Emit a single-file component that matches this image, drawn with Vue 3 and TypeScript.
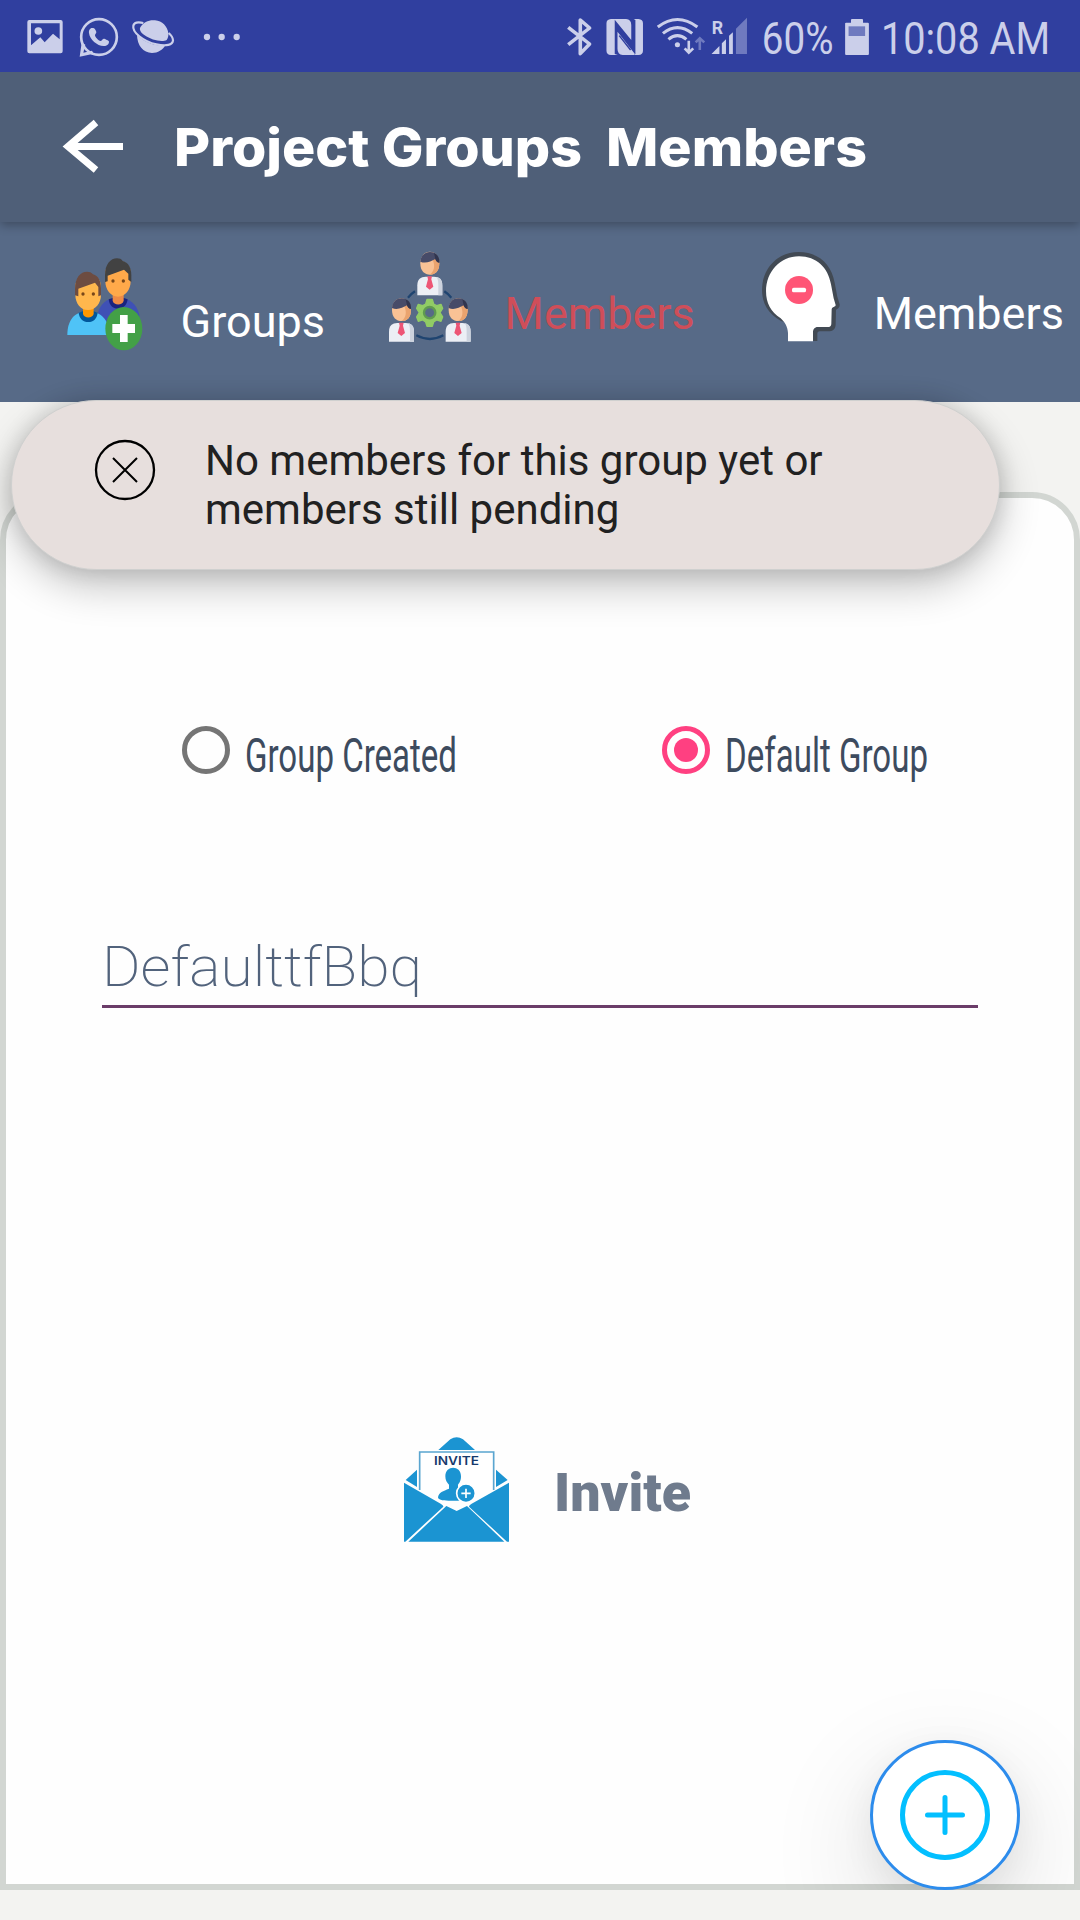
<script setup lang="ts">
import { ref } from 'vue'

type GroupKind = 'created' | 'default'

interface GroupOption {
  kind: GroupKind
  label: string
  width: number
}

const options: GroupOption[] = [
  { kind: 'created', label: 'Group Created', width: 212 },
  { kind: 'default', label: 'Default Group', width: 203 },
]
const selected = ref<GroupKind>('default')
const groupName = ref('DefaulttfBbq')
</script>

<template>
  <div class="screen">
    <header class="status">
      <svg class="status-left" viewBox="0 0 750 216">
        <g fill="#cbcfea">
          <path fill-rule="evenodd" d="M88 60h94q6 0 6 6v88q0 6-6 6H88q-6 0-6-6V66q0-6 6-6zM93 70v66l28-24 13 15 25-26 20 17V70z" />
          <circle cx="115" cy="93" r="11.500" />
          <circle cx="297" cy="111" r="53.500" fill="none" stroke="#cbcfea" stroke-width="8" />
          <path d="M245 128l-6 42 42-9-5-9-26 6 6-24z" />
          <path d="M276 84c-6 0-10 7-9 15 2 20 26 40 45 39 9 0 15-6 15-13 0-3-12-9-16-9-4 1-6 7-9 7-7-1-17-12-17-17 0-4 4-5 4-9 0-4-5-13-9-13z" />
          <path d="M421 82c9-16 27-23 44-21 22 2 37 18 40 38 1 8-1 15-5 21-14 8-46 0-66-14-12-8-17-17-13-24z" />
          <path d="M411 103c14 20 56 39 85 33-8 14-22 23-40 23-26 0-45-22-45-56z" />
          <path d="M430 69c-16-4-28-2-30 8-4 20 31 48 69 56 30 6 49 2 50-12 0-7-5-15-13-22" fill="none" stroke="#cbcfea" stroke-width="6.500" />
          <circle cx="621" cy="111" r="9.500" /><circle cx="665" cy="111" r="9.500" /><circle cx="710" cy="111" r="9.500" />
        </g>
      </svg>
      <svg class="status-right" viewBox="0 0 1568 216" preserveAspectRatio="none">
        <path d="M82 82l62 50-27 29V60l27 24-62 50" fill="none" stroke="#cbcfea" stroke-width="10.500" stroke-linejoin="round" />
        <path d="M206 57h44q15 2 15 18v45l-48-61v103l9 3h-20q-13-1-13-13V70q0-12 13-13z" fill="#cbcfea" />
        <path d="M272 57h14q13 1 13 13v82q0 12-13 13h-12l3-3V60zM225 95l50 66-1 4h-34q-15-1-15-19z" fill="#cbcfea" />
        <path d="M230 107l33 43M231 96l28 26" stroke="#303f9f" stroke-width="4" />
        <g fill="none" stroke="#cbcfea" stroke-width="9">
          <path d="M342 81q57-45 115 0M357 100q42-34 85 0M373 118q26-22 52 0" />
          <path d="M432 122v35M420 145l12 13 13-13" stroke-width="7.500" />
          <path d="M464 150v-34M452 127l12-12 13 12" stroke="#6f7abf" stroke-width="7.500" />
        </g>
        <circle cx="399" cy="134" r="7.500" fill="#cbcfea" />
        <path d="M569 162V86l32-33v109z" fill="#6f7abf" />
        <path d="M498 162l23-24v24zM528 162v-32l12-12v44zM549 162v-55l11-10v65z" fill="#cbcfea" />
        <path d="M886 70q0-2 3-2h14v-8q0-3 3-3h29q3 0 3 3v8h14q3 0 3 3v91q0 3-3 3h-63q-3 0-3-3z" fill="#cbcfea" />
        <path d="M896 79h48v29h-48z" fill="#6f7abf" />
        <g fill="#cbcfea">
          <text x="499" y="101" font-size="54" font-weight="700" textLength="33" lengthAdjust="spacingAndGlyphs">R</text>
          <text x="644" y="162" font-size="135" textLength="208" lengthAdjust="spacingAndGlyphs">60%</text>
          <text x="990" y="162" font-size="135" textLength="491" lengthAdjust="spacingAndGlyphs">10:08 AM</text>
        </g>
      </svg>
    </header>

    <div class="toolbar">
      <svg class="back" width="62" height="54" viewBox="0 0 62 54">
        <path d="M34 3.500L6 27.500L34 51M6 27.500H61" fill="none" stroke="#fff" stroke-width="7" />
      </svg>
      <svg class="title" width="760" height="80" viewBox="0 0 760 80">
        <text x="1" y="48" textLength="408" lengthAdjust="spacingAndGlyphs">Project Groups</text>
        <text x="433" y="48" textLength="261" lengthAdjust="spacingAndGlyphs">Members</text>
      </svg>
    </div>

    <nav class="tabs">
      <div class="tab first">
        <svg class="tab-icon" width="80" height="97" viewBox="75 75 240 291">
          <path d="M174 248c7-26 26-45 60-45s56 18 64 52v25H190z" fill="#3f51b5" />
          <path d="M206 208c2 18 12 28 28 28s27-11 29-28l-14-5h-28z" fill="#1a237e" />
          <path d="M218 190h33v22c-3 15-30 15-33 0z" fill="#ef8b46" />
          <path d="M196 130c0-50 78-50 76 0v24c0 26-17 46-38 46s-38-20-38-46z" fill="#ffa94a" />
          <path d="M195 156v-20c0-34 17-51 36-51 7 0 14 2 17 8 17 4 26 20 26 42v21l-9-7v-18l-13-12-49 18v17z" fill="#424242" />
          <circle cx="219" cy="153" r="5" fill="#784719" /><circle cx="250" cy="153" r="5" fill="#784719" />
          <path d="M82 315c0-42 20-71 62-71 38 0 64 26 64 71z" fill="#4fc3f7" />
          <path d="M116 248c2 18 13 28 29 28 15 0 26-10 28-28l-14-5h-29z" fill="#01579b" />
          <path d="M129 230h32v22c-3 14-29 14-32 0z" fill="#ff9800" />
          <path d="M106 170c0-50 78-50 77 0v24c0 26-17 46-39 46s-38-20-38-46z" fill="#ffb74d" />
          <path d="M105 196v-19c0-35 17-52 36-52 7 0 14 2 18 8 16 4 24 20 24 42v21l-8 3v-28l-10-13-50 18v23z" fill="#6d4c41" />
          <circle cx="129" cy="192" r="5" fill="#784719" /><circle cx="160" cy="192" r="5" fill="#784719" />
          <ellipse cx="251.500" cy="296" rx="55.500" ry="65" fill="#43a047" />
          <path d="M240 255h23v27h22v27h-22v27h-23v-27h-23v-27h23z" fill="#fff" />
        </svg>
        <span class="tab-label low">Groups</span>
      </div>
      <div class="tab second">
        <svg class="tab-icon" width="83.300" height="93.300" viewBox="55 60 250 280">
          <defs>
            <g id="person">
              <path d="M-28 34c0-46 57-46 57 0 0 24-12 34-28 34S-28 58-28 34z" fill="#f9c295" />
              <path d="M8 2c15 6 21 17 21 32 0 24-12 34-28 34C15 58 17 38 8 22z" fill="#eaa36e" />
              <path d="M-28 29c2-20 15-29 29-29 18 0 29 13 28 32-7-1-11-7-12-11-13 7-29 15-45 8z" fill="#474b68" />
              <path d="M13 3c11 5 17 15 16 29-7-1-11-7-12-11z" fill="#31354e" />
              <path d="M-37 130V100c0-18 10-26 25-26h25c16 0 25 8 25 26v30z" fill="#eceff5" />
              <path d="M21 75c11 2 17 10 17 25v30H26v-30c0-13-1-18-5-25z" fill="#cdd3de" />
              <path d="M-7 73H7L5 82l6 22L0 113l-11-9 6-22z" fill="#ed5575" />
            </g>
          </defs>
          <path d="M115 203q10-12 21-19M224 184q11 7 21 19M140 316q41 22 81 0" fill="none" stroke="#1f4470" stroke-width="7" />
          <use href="#person" x="180" y="66" />
          <use href="#person" x="95" y="205" />
          <use href="#person" x="265" y="205" />
          <path d="M172 208h16l4 14 9 5 13-4 5 12-8 13 8 13-5 13-13-4-9 6-4 13h-16l-4-13-9-6-13 4-5-13 8-13-8-13 5-12 13 4 9-5z" fill="#91cc65" stroke="#91cc65" stroke-width="4" stroke-linejoin="round" />
          <circle cx="180" cy="248" r="17" fill="#576a87" stroke="#5f9a50" stroke-width="7" />
        </svg>
        <span class="tab-label active">Members</span>
      </div>
      <div class="tab third">
        <svg class="tab-icon" width="81.700" height="93.300" viewBox="60 60 245 280">
          <path d="M123 273C83 251 66 218 66 180 66 116 112 66 176 66c60 0 99 38 108 92l8 42 7 23c1 9-5 13-11 16l-1 45c-1 14-9 20-22 20h-26q-7 0-7 8v21h-20V300z" fill="#424a54" />
          <path d="M144 334v-24c-1-20-10-34-22-45-30-19-44-46-44-81 0-58 42-105 99-105 53 0 87 34 96 84l8 42 6 20c0 7-11 4-12 13l-1 43c0 7-4 10-11 10h-30c-9 0-14 7-14 16v27z" fill="#fff" />
          <circle cx="177" cy="180" r="42" fill="#ff5576" />
          <rect x="156" y="173" width="42" height="14" rx="5" fill="#fff" />
        </svg>
        <span class="tab-label">Members</span>
      </div>
    </nav>

    <main class="body">
      <section class="panel">
        <div class="options">
          <label v-for="o in options" :key="o.kind" class="option" @click="selected = o.kind">
            <svg class="radio" width="50" height="50" viewBox="-25 -25 50 50">
              <circle r="21.500" fill="none" :stroke="selected === o.kind ? '#ff4081' : '#757575'" stroke-width="5" />
              <circle v-if="selected === o.kind" r="12" fill="#ff4081" />
            </svg>
            <svg class="option-label" width="260" height="70" viewBox="0 0 260 70">
              <text x="0" y="46" :textLength="o.width" lengthAdjust="spacingAndGlyphs">{{ o.label }}</text>
            </svg>
          </label>
        </div>

        <div class="field">
          <svg width="400" height="78" viewBox="0 0 400 78">
            <text x="0" y="59" textLength="320" lengthAdjust="spacingAndGlyphs">{{ groupName }}</text>
          </svg>
        </div>

        <div class="invite">
          <svg width="107" height="107" viewBox="69 78 321 321">
            <path d="M175 120l36-32q19-13 38 0l36 32zM77 210l34-31v52zM383 210l-35-31v52z" fill="#1b94d2" />
            <path d="M119 240V126h222v114" fill="#fff" stroke="#5aa5d0" stroke-width="5" />
            <path d="M72 218l110 63q9 5 8 9L76 395h-4zM387 218l-112 63q-9 5-8 9l114 105h6zM85 395l114-107 31 15 31-15 112 107z" fill="#1b94d2" />
            <text class="invite-mark" x="162" y="165" textLength="135" lengthAdjust="spacingAndGlyphs">INVITE</text>
            <path d="M196 199c0-34 47-34 47 0 0 14-5 20-9 25v12l12 36h-40c-20 0-32-3-32-10 2-15 16-19 33-26v-12c-6-6-11-13-11-25z" fill="#1b94d2" />
            <circle cx="258" cy="250" r="28" fill="#1b94d2" stroke="#fff" stroke-width="5" />
            <path d="M258 236v28M244 250h28" stroke="#fff" stroke-width="5" />
          </svg>
          <svg class="invite-label" width="160" height="70" viewBox="0 0 160 70">
            <text x="1" y="54" textLength="137" lengthAdjust="spacingAndGlyphs">Invite</text>
          </svg>
        </div>

        <button class="fab" type="button" aria-label="Add">
          <svg width="90" height="90" viewBox="-45 -45 90 90">
            <circle r="42.500" fill="none" stroke="#03bfff" stroke-width="5" />
            <path d="M-17.500 0h35M0-17.500v35" stroke="#03bfff" stroke-width="5" stroke-linecap="round" />
          </svg>
        </button>
      </section>
    </main>

    <div class="toast" role="status">
      <svg class="toast-icon" width="62" height="62" viewBox="-31 -31 62 62">
        <circle r="29" fill="none" stroke="#000" stroke-width="2.300" />
        <path d="M-12-12L12 12M12-12L-12 12" stroke="#000" stroke-width="2" />
      </svg>
      <p class="toast-text">No members for this group yet or<br>members still pending</p>
    </div>
  </div>
</template>

<style>
body {
  margin: 0;
}
</style>

<style scoped>
.screen {
  position: relative;
  width: 1080px;
  height: 1920px;
  display: flex;
  flex-direction: column;
  overflow: hidden;
  background: #f3f3f1;
  font-family: Roboto, sans-serif;
}
svg {
  display: block;
  flex: none;
  overflow: visible;
}
.status {
  display: flex;
  justify-content: space-between;
  height: 72px;
  background: #303f9f;
}
.status-left {
  width: 250px;
  height: 72px;
}
.status-right {
  width: 540px;
  height: 72px;
}
.toolbar {
  position: relative;
  z-index: 1;
  display: flex;
  align-items: flex-start;
  height: 150px;
  background: #4f5f78;
  box-shadow: 0 3px 10px rgba(0, 0, 0, 0.3);
  clip-path: inset(0 0 -20px 0);
}
.back {
  margin: 47px 0 0 62px;
}
.title {
  margin: 46px 0 0 49px;
  fill: #fff;
  font: 800 52px Inter, sans-serif;
}
.tabs {
  display: flex;
  height: 180px;
  background: #576a87;
}
.tab {
  display: flex;
  align-items: flex-start;
  flex: none;
}
.first {
  width: 323.300px;
  padding-left: 65px;
}
.second {
  width: 371.700px;
}
.tab-icon {
  margin-top: 28px;
}
.first .tab-icon {
  margin-top: 33px;
}
.tab-label {
  margin: 66px 0 0 32px;
  color: #fff;
  font-size: 45px;
  line-height: 52px;
}
.tab-label.low {
  margin-top: 74px;
  margin-left: 35.500px;
}
.tab-label.active {
  margin-left: 33px;
  color: #cf4e59;
}
.body {
  flex: 1;
  padding: 90px 0 30px;
}
.panel {
  position: relative;
  box-sizing: border-box;
  height: 1398px;
  border: 6px solid #d2d6d2;
  border-radius: 48px 48px 0 0;
  background: #fefefe;
  clip-path: inset(0);
}
.options {
  display: flex;
  padding: 227px 0 0 175px;
}
.option {
  display: flex;
  flex: none;
  width: 480px;
  height: 50px;
}
.option-label {
  margin: 1px 0 0 14px;
  fill: #3d4b5e;
  font: 400 48px Roboto, sans-serif;
}
.field {
  width: 876px;
  height: 78px;
  margin: 152px 0 0 96px;
  border-bottom: 3px solid #6b3d69;
  fill: #52637c;
  font: 200 56px Roboto, sans-serif;
}
.invite {
  display: flex;
  margin: 428px 0 0 397px;
}
.invite-label {
  margin: 21px 0 0 43px;
  fill: #6f7b8d;
  font: 900 54px Roboto, sans-serif;
}
.invite-mark {
  fill: #173a6c;
  font: 600 37px Inter, sans-serif;
}
.fab {
  position: absolute;
  left: 864px;
  top: 1242px;
  width: 150px;
  height: 150px;
  display: flex;
  align-items: center;
  justify-content: center;
  padding: 0;
  border: 3px solid #2d8cec;
  border-radius: 50%;
  background: #fff;
  box-shadow: 0 36px 110px rgba(0, 0, 0, 0.14), 0 10px 36px rgba(0, 0, 0, 0.06);
}
.toast {
  position: absolute;
  z-index: 2;
  left: 11px;
  top: 400px;
  box-sizing: border-box;
  width: 989px;
  height: 170px;
  display: flex;
  align-items: flex-start;
  border: 1px solid #cfd0cf;
  border-radius: 85px;
  background: #e7dfdd;
  box-shadow: 0 16px 40px rgba(0, 0, 0, 0.24), 0 0 22px rgba(0, 0, 0, 0.14);
}
.toast-icon {
  margin: 38px 0 0 82px;
}
.toast-text {
  margin: 35px 0 0 49px;
  color: #212121;
  font-size: 42px;
  line-height: 49px;
}
</style>
